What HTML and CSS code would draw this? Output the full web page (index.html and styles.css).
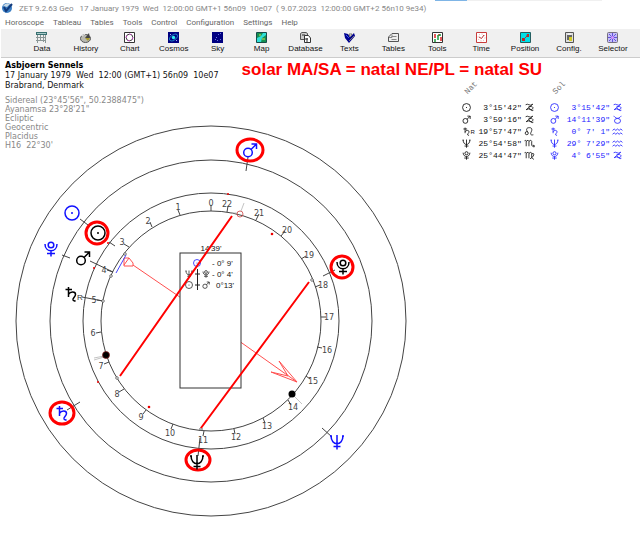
FILE: index.html
```html
<!DOCTYPE html>
<html lang="en">
<head>
<meta charset="utf-8">
<title>ZET 9.2.63 Geo</title>
<link rel="stylesheet" href="styles.css">
</head>
<body>
<svg class="defs" aria-hidden="true">
  <symbol id="sun" viewBox="0 0 16 16"><circle cx="8" cy="8" r="7"/><circle class="solid" cx="8" cy="8" r="1"/></symbol>
  <symbol id="mars" viewBox="0 0 16 16"><circle cx="6" cy="10.5" r="4.3"/><path d="M9 7.5 14.5 2M9.5 2h5v5"/></symbol>
  <symbol id="saturn" viewBox="0 0 16 16"><path d="M2.500 3.500h6.500M5.500 1v10M5.500 8.500C7.500 5 12.500 5.500 12.500 8.500 12.500 11 9.500 11.500 10 14q.8 1.500 2.500.5"/></symbol>
  <symbol id="neptune" viewBox="0 0 16 16"><path d="M2 1.500C2 12.500 14 12.500 14 1.500M8 1v14.500M4.500 12.500h7M1 2h2M13 2h2"/></symbol>
  <symbol id="pluto" viewBox="0 0 16 16"><circle cx="8" cy="4" r="2.800"/><path d="M2 3C2 12 14 12 14 3M8 9.500v6M4 12.500h8"/></symbol>
  <symbol id="capricorn" viewBox="0 0 20 16"><path d="M3 3q3-2 6 0t7-1L4 12q5-3 8 0t5 1M8 7c5-2 10 0 8 3s-5 2-7-1"/></symbol>
  <symbol id="taurus" viewBox="0 0 20 16"><path d="M3 2c2 0 3 4 7 4s5-4 7-4"/><ellipse cx="10" cy="10.500" rx="5.500" ry="4.500"/></symbol>
  <symbol id="aquarius" viewBox="0 0 20 16"><path d="M1 6q3-5 6 0 3-5 6 0 3-5 6 0M1 13q3-5 6 0 3-5 6 0 3-5 6 0"/></symbol>
  <symbol id="leo" viewBox="0 0 20 16"><circle cx="5" cy="11" r="2.800"/><path d="M6.500 9C2 2 7 1 10 1c5 0 5 4 3 8s-1 6 4 5"/></symbol>
  <symbol id="scorpio" viewBox="0 0 20 16"><path d="M1 3q2-2 3 1v9M4 4q4-4 5 0v9M9 4q4-4 5 0v7q1 3 4 2M16 11l3 1-1 3"/></symbol>
  <symbol id="virgo" viewBox="0 0 20 16"><path d="M1 3q2-2 3 1v9M4 4q4-4 5 0v9M9 4q4-4 5 0v7q1 3 4 4M14 5c6-3 5 5-3 9"/></symbol>
</svg>

<header class="titlebar">
  <svg class="logo" viewBox="0 0 12 12" aria-hidden="true"><circle cx="6" cy="6" r="5" fill="#3b7fc4"/><path d="M2 4q3-4 7-2L6 5z" fill="#c9d9e4"/><path d="M3 5l2 4 6-7" fill="none" stroke="#123a7c" stroke-width="2"/></svg>
  <h1 class="title">ZET 9.2.63 Geo   17 January 1979  Wed  12:00:00 GMT+1 56n09  10e07  ( 9.07.2023  12:00:00 GMT+2 56n10 9e34)</h1>
</header>

<nav class="menu">
  <a href="#">Horoscope</a><a href="#">Tableau</a><a href="#">Tables</a><a href="#">Tools</a><a href="#">Control</a><a href="#">Configuration</a><a href="#">Settings</a><a href="#">Help</a>
</nav>

<div class="toolbar">
  <button class="tool"><svg viewBox="0 0 11 11"><path d="M0 0h11v3H0z" fill="#387070"/><path d="M1.500 3v8M4.500 3v6M7.500 3v7M9.500 3v8M0 5.500h10M0 8.500h9" stroke="#8a9696" fill="none"/><path d="M1 1.500h9" stroke="#a8c8c8"/></svg>Data</button>
  <button class="tool"><svg viewBox="0 0 11 11"><ellipse cx="5.500" cy="6.500" rx="5" ry="4" fill="#b8b8b0" stroke="#555"/><path d="M5 6 9 1l1 5z" fill="#444"/><path d="M5 6h5l-2 3z" fill="#a79b2c"/><path d="M2 4l3-2" stroke="#eee"/></svg>History</button>
  <button class="tool"><svg viewBox="0 0 11 11"><path d="M.5.5h10v10H.5z" fill="#fff" stroke="#333"/><circle cx="5.500" cy="5.500" r="3.300" fill="none" stroke="#444"/><circle cx="5.500" cy="5.500" r="3.300" fill="none" stroke="#e040e0" stroke-dasharray="2 3"/></svg>Chart</button>
  <button class="tool"><svg viewBox="0 0 11 11"><path d="M0 0h11v11H0z" fill="#000080"/><ellipse cx="5.500" cy="5.500" rx="4.500" ry="2.500" transform="rotate(-35 5.500 5.500)" fill="none" stroke="#1879c0"/><circle cx="5.500" cy="5.500" r="1.700" fill="#30f0f0"/><path d="M2 2h1v1H2zM8 8h1v1H8z" fill="#aaf"/></svg>Cosmos</button>
  <button class="tool"><svg viewBox="0 0 11 11"><path d="M0 0h11v11H0z" fill="#000080"/><path d="M8 1h1v1H8zM6 2h1v1H6zM4 5h1v1H4zM3 7h1v1H3zM5 8h1v1H5zM8 7h1v1H8z" fill="#6d75dc"/></svg>Sky</button>
  <button class="tool"><svg viewBox="0 0 11 11"><path d="M.5.5h10v10H.5z" fill="#30e0d8" stroke="#174b48"/><path d="M1 1h6L5 4 3 5 1 6zM6 6l4-3v7H5z" fill="#159052"/><path d="M3 3h2M6 7h3" stroke="#d0e050"/></svg>Map</button>
  <button class="tool"><svg viewBox="0 0 11 11"><path d="M.5 1.500 2 .5h4l1.500 1v6H.5z" fill="#ccc" stroke="#555"/><path d="M4.500 5V3.500h4L10.500 6v4.500h-6z" fill="#fff" stroke="#333"/><path d="M2 3h3M5 7h3M7 6v4" stroke="#333"/></svg>Database</button>
  <button class="tool"><svg viewBox="0 0 11 11"><path d="M0 1 4 2l2 3 4-4 1 3-6 7-4-5z" fill="#000090"/><path d="M5 2h3L6 5zM5 9l5-5" fill="#fff" stroke="#777"/><path d="M2 3l3 3" stroke="#3a54e8"/></svg>Texts</button>
  <button class="tool"><svg viewBox="0 0 11 11"><path d="M.5 9.500V5L4 1.500h6.500v8z" fill="#eee" stroke="#555"/><path d="M3.500 4.500h5M3.500 7.500h5M1 5.500h3v-3" stroke="#888" fill="none"/></svg>Tables</button>
  <button class="tool"><svg viewBox="0 0 11 11"><path d="M.5.5h10v10H.5z" fill="#fff" stroke="#333"/><path d="M3 2v4M7 2v2M9 5v4" stroke="#d22" stroke-width="1.500"/><path d="M3 7v3M6 3v5M8 2v2" stroke="#1a9a3c" stroke-width="1.500"/></svg>Tools</button>
  <button class="tool"><svg viewBox="0 0 11 11"><path d="M.5.5h10v10H.5z" fill="#fff" stroke="#c83c3c"/><circle cx="5.500" cy="5.500" r="3.500" fill="none" stroke="#e4a0a0" stroke-dasharray="1 1.700"/><path d="M3 5l2.500 1.500L8 3" fill="none" stroke="#b33"/></svg>Time</button>
  <button class="tool"><svg viewBox="0 0 11 11"><path d="M.5.5h10v10H.5z" fill="#00e0e8" stroke="#245e60"/><path d="M2 6h3v3H2zM7 2h2v3H6z" fill="#c52222"/><path d="M4 7l4-4" stroke="#844"/></svg>Position</button>
  <button class="tool"><svg viewBox="0 0 11 11"><path d="M1.500.5h8v10h-8z" fill="#ddd" stroke="#555"/><path d="M3 3h5v5H3z" fill="#666"/><path d="M5 5h3v4H5z" fill="#d4cb25"/><path d="M4 2h3" stroke="#fff"/></svg>Config.</button>
  <button class="tool"><svg viewBox="0 0 11 11"><rect x=".5" y=".5" width="10" height="10" rx="1" fill="#c4bdf8" stroke="#77717f"/><path d="M5.500 1v9M1 5.500h9M2 2l7 7M9 2 2 9" stroke="#6250db"/><circle cx="5.500" cy="5.500" r="1.500" fill="#d69aff"/></svg>Selector</button>
</div>

<main class="stage">
  <div class="top">
    <section class="info">
      <h2 class="name">Asbjoern Sennels</h2>
      <p class="birth">17 January 1979  Wed  12:00 (GMT+1) 56n09  10e07</p>
      <p class="birth">Brabrand, Denmark</p>
      <ul class="settings">
        <li>Sidereal (23°45'56", 50.2388475")</li>
        <li>Ayanamsa 23°28'21"</li>
        <li>Ecliptic</li>
        <li>Geocentric</li>
        <li>Placidus</li>
        <li>H16  22°30'</li>
      </ul>
    </section>
    <section class="side">
      <p class="headline">solar MA/SA = natal NE/PL = natal SU</p>
      <div class="tables">
        <table class="positions">
          <caption><span>Nat</span></caption>
          <tr><td><svg><use href="#sun"/></svg></td><td> 3°15'42"</td><td><svg class="sign"><use href="#capricorn"/></svg></td></tr>
          <tr><td><svg><use href="#mars"/></svg></td><td> 3°59'16"</td><td><svg class="sign"><use href="#capricorn"/></svg></td></tr>
          <tr><td><svg><use href="#saturn"/></svg><small>R</small></td><td>19°57'47"</td><td><svg class="sign"><use href="#leo"/></svg></td></tr>
          <tr><td><svg><use href="#neptune"/></svg></td><td>25°54'58"</td><td><svg class="sign"><use href="#scorpio"/></svg></td></tr>
          <tr><td><svg><use href="#pluto"/></svg></td><td>25°44'47"</td><td><svg class="sign"><use href="#virgo"/></svg></td></tr>
        </table>
        <table class="positions solar">
          <caption><span>Sol</span></caption>
          <tr><td><svg><use href="#sun"/></svg></td><td> 3°15'42"</td><td><svg class="sign"><use href="#capricorn"/></svg></td></tr>
          <tr><td><svg><use href="#mars"/></svg></td><td>14°11'39"</td><td><svg class="sign"><use href="#taurus"/></svg></td></tr>
          <tr><td><svg><use href="#saturn"/></svg></td><td> 0° 7' 1"</td><td><svg class="sign"><use href="#aquarius"/></svg></td></tr>
          <tr><td><svg><use href="#neptune"/></svg></td><td>29° 7'29"</td><td><svg class="sign"><use href="#aquarius"/></svg></td></tr>
          <tr><td><svg><use href="#pluto"/></svg></td><td> 4° 6'55"</td><td><svg class="sign"><use href="#capricorn"/></svg></td></tr>
        </table>
      </div>
    </section>
  </div>

  <svg class="chart" viewBox="0 120 420 400" role="img" aria-label="Dial chart">
    <g class="ring">
      <circle cx="211" cy="321" r="195"/><circle cx="211" cy="321" r="161"/><circle cx="211" cy="321" r="128"/><circle cx="211" cy="321" r="110"/>
      <path d="M211 211v-6M227 212l1-6M256 220l3-6M281 236l4-5M301 259l5-3M315 287l5-2M321 317h5M317 347l5 1M306 376l4 3M288 400l3 5M263 418l2 5M234 429l1 5M204 431l-1 5M173 424l-2 5M146 410l-3 4M124 389l-5 3M109 362l-5 2M101 332l-5 1M103 301l-6-1M113 272l-6-2M129 247l-5-3M152 227l-2-5M180 215l-2-5"/>
      <path d="M80 219l8 6M109 242l6 4M62 255l8 3M90 261l23 11M82 297l21 4M248 157l-2 14M335 270l-12 6M200 438l-2 18M67 410l13-8M322 428l10 9"/>
      <g class="node"><circle cx="125" cy="254" r="1.300"/><circle cx="111" cy="276" r="1.300"/><circle cx="103" cy="301" r="1.300"/><circle cx="117" cy="378" r="1.300"/><circle cx="201" cy="429" r="1.300"/><circle cx="312" cy="280" r="1.300"/></g>
    </g>
    <g class="faint"><path d="M241 211l3-8M295 397l7 7M94 360l10-3M94 358l10-2M230 213h7"/></g>
    <g class="number">
      <text x="211" y="206">0</text><text x="178" y="210">1</text><text x="148" y="224">2</text><text x="122" y="245">3</text><text x="104" y="273">4</text><text x="94" y="303">5</text><text x="93" y="336">6</text><text x="101" y="369">7</text><text x="117" y="397">8</text><text x="141" y="420">9</text><text x="170" y="436">10</text><text x="203" y="443">11</text><text x="236" y="440">12</text><text x="267" y="429">13</text><text x="293" y="410">14</text><text x="313" y="384">15</text><text x="327" y="353">16</text><text x="329" y="320">17</text><text x="323" y="288">18</text><text x="309" y="258">19</text><text x="287" y="233">20</text><text x="259" y="216">21</text><text x="227" y="207">22</text>
    </g>

    <path class="thin-red" d="M133 265 190 304M232 336 297 382M279 361l18 21M271 372l26 10M271 372l17 4-9-15M124 258h5l4 5v3h-9zM124 265l5-7"/>
    <path class="thin-blue" d="M126 255 116 273"/>
    <rect class="box" x="180" y="253" width="61" height="135"/>
    <g class="boxtext">
      <text x="211" y="251" class="mid">14'39'</text>
      <text x="212" y="266">- 0° 9'</text><text x="212" y="277">- 0° 4'</text><text x="216" y="288">0°13'</text>
    </g>
    <g class="glyph small">
      <use class="blue" href="#sun" x="193" y="259" width="8" height="8"/>
      <use href="#neptune" x="185" y="270" width="8" height="8"/><use href="#pluto" x="202" y="270" width="8" height="8"/>
      <use href="#sun" x="185" y="281" width="8" height="8"/><use href="#mars" x="202" y="281" width="8" height="8"/>
    </g>
    <path class="axis" d="M197.500 269v21M195 274h5M195 285h5"/>

    <g class="thick-red">
      <path d="M232 216 120 376M309 282 201 428"/>
    </g>
    <g class="mark">
      <ellipse cx="250" cy="150" rx="13" ry="11"/><circle cx="97" cy="233" r="11"/><circle cx="342" cy="267" r="11"/><ellipse cx="62" cy="413" rx="12" ry="11"/><ellipse cx="198" cy="460" rx="12" ry="10"/>
    </g>
    <g class="glyph">
      <use href="#sun" x="90" y="225" width="16" height="16"/>
      <use class="blue" href="#sun" x="64" y="205" width="16" height="16"/>
      <use class="blue" href="#pluto" x="43" y="241" width="16" height="16"/>
      <use href="#mars" x="75" y="250" width="16" height="16"/>
      <use href="#saturn" x="63" y="286" width="16" height="16"/>
      <use class="blue" href="#mars" x="242" y="142" width="16" height="16"/>
      <use href="#pluto" x="335" y="259" width="16" height="16"/>
      <use class="blue" href="#saturn" x="54" y="405" width="16" height="16"/>
      <use href="#neptune" x="189" y="454" width="16" height="16"/>
      <use class="blue" href="#neptune" x="329" y="434" width="16" height="16"/>
    </g>
    <text class="retro" x="77" y="300">R</text>
    <g class="dot-red"><circle cx="272" cy="234" r="1.300"/><circle cx="228" cy="194" r="1"/><circle cx="149" cy="407" r="1.300"/><circle cx="98" cy="382" r="1"/><circle cx="108" cy="243" r="1"/><circle cx="94" cy="268" r="1"/></g>
    <circle class="red-ring" cx="240" cy="214" r="3"/>
    <circle cx="292" cy="394" r="3.500"/><circle cx="106" cy="355" r="3.500" stroke="#8c1f1f" stroke-width=".7"/>
  </svg>
</main>
</body>
</html>
```

FILE: styles.css
```css
* { box-sizing: border-box; }
body { margin: 0; background: #fff; color: #111; font: 8px Roboto, "Open Sans", sans-serif; }
h1, h2, p, ul { margin: 0; padding: 0; font: inherit; }
ul { list-style: none; }
.defs { display: block; width: 0; height: 0; }

.titlebar {
  display: flex; align-items: center; gap: 6px; height: 16px; padding-left: 1px;
  background: linear-gradient(to right, transparent 68%, #7fb5e6 68%, #7fb5e6 73%, #f0f0f0 73%, #f0f0f0 94%, transparent 94%) no-repeat;
  background-size: 100% 1px;
}
.logo { width: 12px; height: 12px; }
.title { color: #888; white-space: pre; }
.menu { display: flex; gap: 9px; height: 13px; padding-left: 5px; line-height: 13px; }
.menu a { color: #666; text-decoration: none; }

.toolbar {
  display: flex; height: 29px; margin-left: 1px; padding: 0 5px 0 19px;
  background: #f0f0f0; border-bottom: 1px solid #ccc;
}
.tool {
  display: flex; flex: 1 1 0; flex-direction: column; align-items: center; gap: 1px;
  min-width: 0; padding: 3px 0 0; border: 0; background: none; color: #111;
  font: 8px/10px "Liberation Sans", sans-serif;
}
.tool svg { width: 11px; height: 11px; }

.stage { display: grid; grid-template-columns: minmax(0, 1fr); }
.top, .chart { grid-area: 1 / 1; }
.top { display: flex; align-items: flex-start; gap: 8px; padding: 3px 0 0 5px; }
.chart { width: 100%; max-width: 420px; margin-top: 62px; z-index: -1; }

.info { flex: 0 0 36%; font: 8px/10px "DejaVu Sans", sans-serif; }
.name { font-weight: bold; color: #000; }
.birth { white-space: pre; }
.settings { margin-top: 5px; line-height: 9px; color: #888; }
.settings li { white-space: pre; }

.side { flex: 1; }
.headline { color: #f00; font: bold 17px/18px "Liberation Sans", sans-serif; }
.tables { display: flex; justify-content: flex-end; gap: 15px; padding: 3px 17px 0 0; }
.positions { border-collapse: collapse; font: 8px/12px "Liberation Mono", monospace; color: #111; }
.positions caption { height: 20px; padding-left: 2px; text-align: left; color: #777; }
.positions caption span { display: inline-block; transform: rotate(-45deg); }
.positions td { height: 12px; padding: 0; white-space: pre; vertical-align: top; }
.positions td:first-child { width: 17px; }
.positions td:last-child { padding-left: 2px; }
.positions svg { width: 9px; height: 9px; margin-top: 1px; vertical-align: top; fill: none; stroke: currentColor; stroke-width: 1.5px; }
.positions .sign { width: 11px; }
.positions small { font: 6px/12px "Liberation Sans", sans-serif; }
.positions.solar { color: #22f; }
.solid { fill: currentColor; stroke: none; }

.ring { fill: none; stroke: #444; stroke-width: 1px; }
.node { fill: #fff; stroke-width: .7px; }
.faint { stroke: #aaa; stroke-width: .7px; }
.number { font: 8px "DejaVu Sans", sans-serif; fill: #444; text-anchor: middle; }
.box { fill: #fff; stroke: #333; }
.boxtext { font: 8px "Liberation Sans", sans-serif; fill: #111; white-space: pre; }
.mid { text-anchor: middle; }
.axis { stroke: #222; stroke-width: 1px; }
.thin-red { fill: none; stroke: #ff5050; stroke-width: 1px; }
.thin-blue { stroke: #44f; }
.thick-red { stroke: #f00; stroke-width: 2px; }
.mark { fill: none; stroke: #f00; stroke-width: 3px; }
.glyph { fill: none; stroke: currentColor; stroke-width: 1.5px; color: #000; }
.glyph .blue { color: #11f; }
.glyph.small { color: #222; }
.retro { font: 8px "Liberation Sans", sans-serif; fill: #333; }
.dot-red { fill: #e00; }
.red-ring { fill: none; stroke: #c44; stroke-width: .8px; }
```
